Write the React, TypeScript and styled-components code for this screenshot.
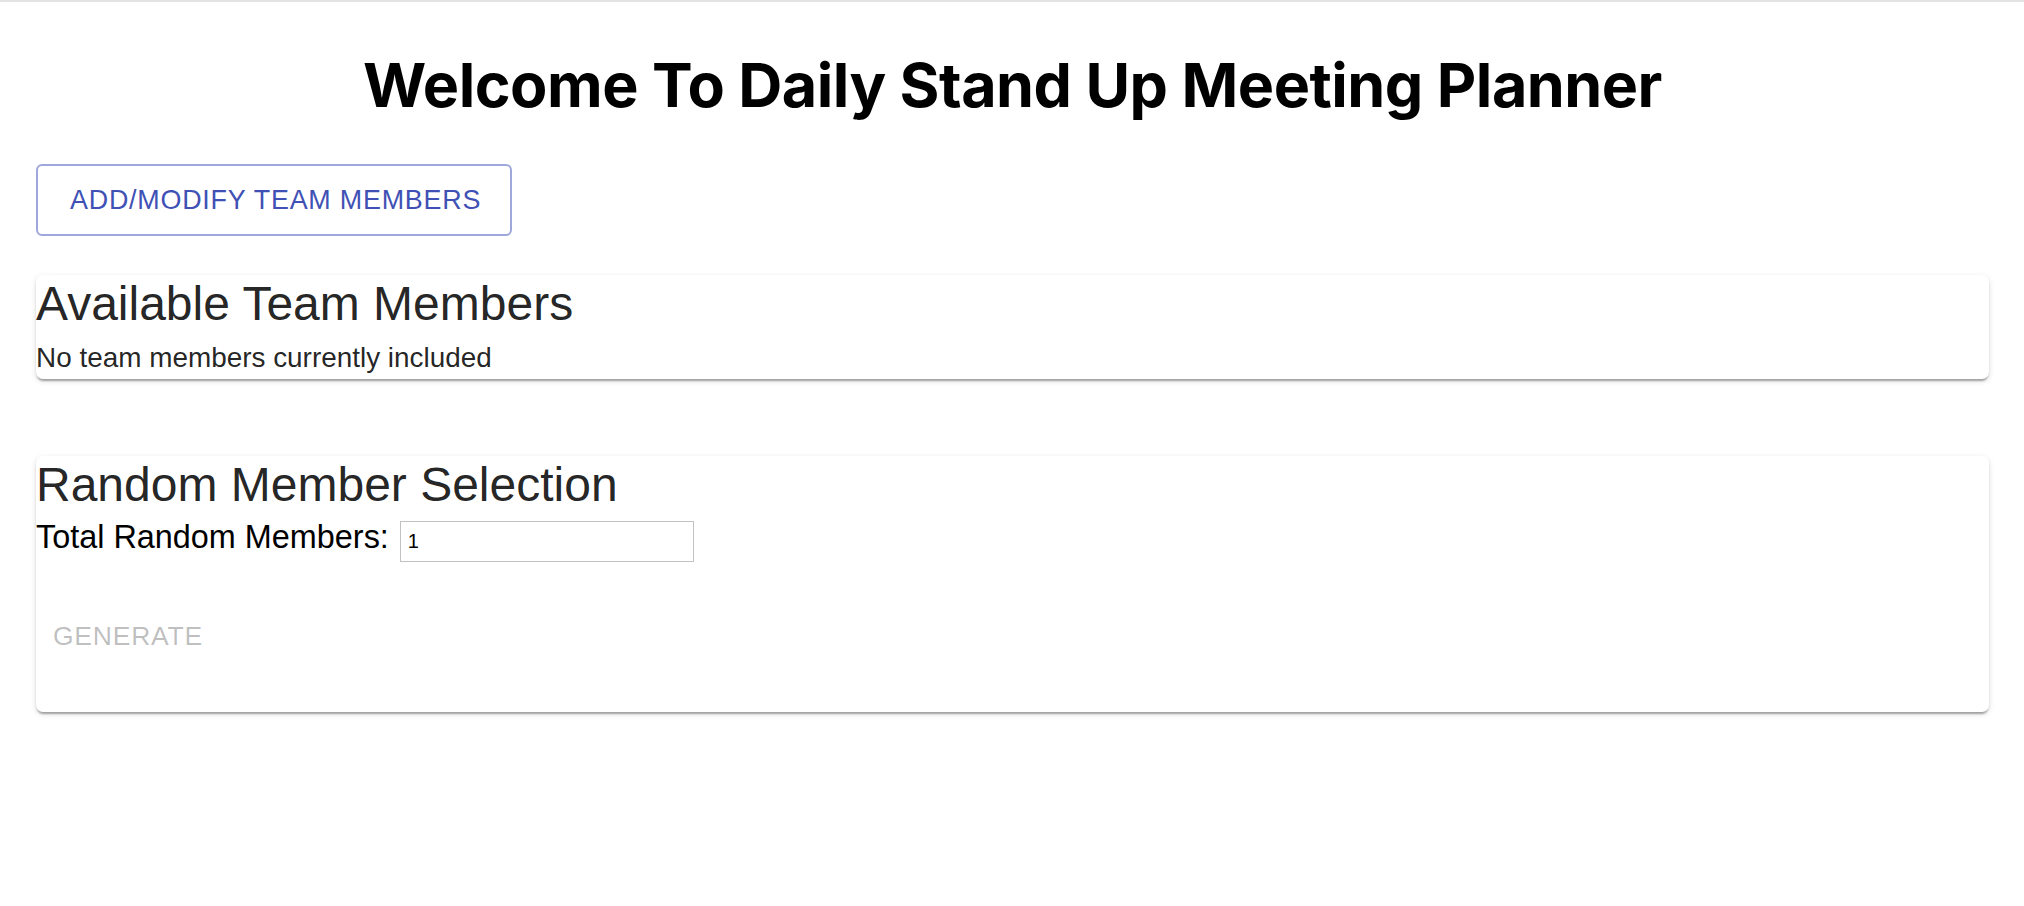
import React from "react";
import styled, { createGlobalStyle } from "styled-components";

const GlobalStyle = createGlobalStyle`
  html, body {
    margin: 0;
    padding: 0;
    background: #ffffff;
  }
  body {
    font-family: "Liberation Sans", Arial, Helvetica, sans-serif;
    color: rgba(0, 0, 0, 0.87);
  }
  * {
    box-sizing: border-box;
  }
`;

const Page = styled.div`
  border-top: 2px solid #e3e3e3;
  padding: 0 35px 60px 36px;
  display: flex;
  flex-direction: column;
  align-items: stretch;
`;

const Title = styled.h1`
  margin: 46px 0 0;
  font-family: Inter, "Liberation Sans", sans-serif;
  font-weight: 700;
  font-size: 61px;
  line-height: 74px;
  letter-spacing: -0.5px;
  color: #000;
  text-align: center;
`;

const Toolbar = styled.div`
  display: flex;
  margin-top: 42px;
`;

const OutlinedButton = styled.button`
  height: 72px;
  padding: 0 29px 0 32px;
  border: 2px solid rgba(63, 81, 181, 0.5);
  border-radius: 6px;
  background: transparent;
  color: #3f51b5;
  font-family: "Liberation Sans", Arial, sans-serif;
  font-size: 26.9px;
  letter-spacing: 0.02857em;
  text-transform: uppercase;
  cursor: pointer;
`;

const Card = styled.section<{ $top: number }>`
  margin-top: ${(p) => p.$top}px;
  background: #fff;
  border-radius: 7px;
  box-shadow: 0 4px 2px -2px rgba(0, 0, 0, 0.2), 0 2px 2px 0 rgba(0, 0, 0, 0.14),
    0 2px 6px 0 rgba(0, 0, 0, 0.12);
  display: flex;
  flex-direction: column;
`;

const CardTitle = styled.h2`
  margin: 0;
  font-weight: 400;
  font-size: 48px;
  line-height: 58px;
  color: rgba(0, 0, 0, 0.87);
`;

const BodyText = styled.p`
  margin: 4px 0 0;
  font-size: 27.9px;
  line-height: 42px;
  color: rgba(0, 0, 0, 0.87);
`;

const FieldRow = styled.div`
  margin-top: 5px;
  display: flex;
  align-items: baseline;
  gap: 11px;
`;

const FieldLabel = styled.label`
  font-size: 32.4px;
  line-height: 37px;
  color: #000;
`;

const NumberInput = styled.input`
  width: 294px;
  height: 41px;
  border: 1px solid #c2c2c2;
  padding: 0 7px;
  font-family: "Liberation Sans", Arial, sans-serif;
  font-size: 20px;
  color: #000;
  background: #fff;
  outline: none;
  -moz-appearance: textfield;
  &::-webkit-inner-spin-button,
  &::-webkit-outer-spin-button {
    -webkit-appearance: none;
    margin: 0;
  }
`;

const Actions = styled.div`
  display: flex;
  padding: 40px 0 42px 1px;
`;

const TextButton = styled.button`
  padding: 11px 16px;
  border: none;
  background: transparent;
  color: rgba(0, 0, 0, 0.26);
  font-family: "Liberation Sans", Arial, sans-serif;
  font-size: 26.5px;
  line-height: 46px;
  letter-spacing: 0.02857em;
  text-transform: uppercase;
  cursor: default;
`;

export default function App() {
  return (
    <>
      <GlobalStyle />
      <Page>
        <Title>Welcome To Daily Stand Up Meeting Planner</Title>
        <Toolbar>
          <OutlinedButton type="button">Add/Modify Team Members</OutlinedButton>
        </Toolbar>
        <Card $top={39}>
          <CardTitle>Available Team Members</CardTitle>
          <BodyText>No team members currently included</BodyText>
        </Card>
        <Card $top={77}>
          <CardTitle>Random Member Selection</CardTitle>
          <FieldRow>
            <FieldLabel htmlFor="total">Total Random Members:</FieldLabel>
            <NumberInput id="total" type="number" defaultValue={1} />
          </FieldRow>
          <Actions>
            <TextButton type="button" disabled>
              Generate
            </TextButton>
          </Actions>
        </Card>
      </Page>
    </>
  );
}
